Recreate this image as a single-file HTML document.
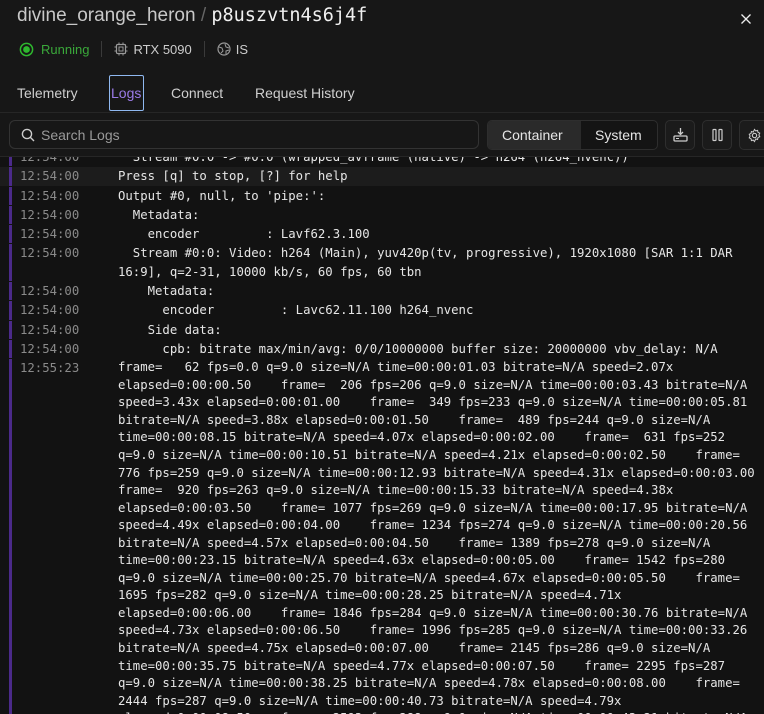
<!DOCTYPE html>
<html><head><meta charset="utf-8"><style>
*{box-sizing:border-box;margin:0;padding:0}
body{width:764px;height:714px;overflow:hidden;background:#171717;font-family:"Liberation Sans",sans-serif;color:#ddd;position:relative}
.abs{position:absolute}
.title{left:17px;top:5px;font-size:19px;color:#c8c8c8;white-space:nowrap}
.title .m{font-family:"DejaVu Sans Mono",monospace;color:#f0f0f0;font-size:18.5px}
.status{top:41px;left:19px;font-size:13px;display:flex;align-items:center;white-space:nowrap}
.sep{width:1px;height:16px;background:#3a3a3a;margin:0 12px}
.tabs{top:85px;font-size:14px;color:#cfcfcf}
.tab{position:absolute;top:0;white-space:nowrap}
.hline{left:0;right:0;top:112px;height:1px;background:#262626}
.search{left:9px;top:120px;width:470px;height:29px;border:1px solid #333;border-radius:6px;background:#171717}
.seg{left:487px;top:120px;width:171px;height:30px;border:1px solid #2e2e2e;border-radius:5px;background:#141414;font-size:14px}
.btn{top:120px;width:30px;height:30px;border:1px solid #2e2e2e;border-radius:5px;background:#1b1b1b}
.logs{left:0;top:156px;width:764px;height:558px;background:#121212;border-top:1px solid #262626;overflow:hidden;font-family:"DejaVu Sans Mono",monospace;font-size:12.3px;color:#e6e6e6}
.row{position:relative;margin-bottom:1px;line-height:18.3px}
.row .bar{position:absolute;left:9px;top:0;bottom:0;width:3px;background:#4b2a8a}
.row .ts{position:absolute;left:20px;top:0;color:#8a8a8a}
.row .msg{margin-left:118px;white-space:pre}
.row .msg.big{white-space:normal}
.big div{height:17.55px;line-height:17.55px;white-space:pre}
</style></head><body>
<div class="abs title">divine_orange_heron <span style="color:#666">/</span> <span class="m">p8uszvtn4s6j4f</span></div>
<svg class="abs" style="left:741px;top:14px" width="10" height="10" viewBox="0 0 10 10"><path d="M0.5 0.5L9.5 9.5M9.5 0.5L0.5 9.5" stroke="#eee" stroke-width="1.3"/></svg>
<div class="abs status">
<svg width="15" height="15" viewBox="0 0 16 16"><circle cx="8" cy="8" r="6.5" fill="none" stroke="#2eb82e" stroke-width="1.6"/><circle cx="8" cy="8" r="3.6" fill="#2eb82e"/></svg>
<span style="color:#3aa83a;margin-left:7px">Running</span>
<span class="sep"></span>
<svg width="14" height="14" viewBox="0 0 14 14"><rect x="2.5" y="2.5" width="9" height="9" rx="1" fill="none" stroke="#999" stroke-width="1.2"/><rect x="5" y="5" width="4" height="4" fill="none" stroke="#999"/><path d="M5 0.5v2M9 0.5v2M5 11.5v2M9 11.5v2M0.5 5h2M0.5 9h2M11.5 5h2M11.5 9h2" stroke="#999"/></svg>
<span style="color:#ccc;margin-left:5px">RTX 5090</span>
<span class="sep"></span>
<svg width="14" height="14" viewBox="0 0 14 14"><circle cx="7" cy="7" r="6" fill="none" stroke="#999" stroke-width="1.2"/><path d="M2 5l3 1 1 3-2 2M8 2l1 3 3 1M9 12l0-3 3-1" fill="none" stroke="#999"/></svg>
<span style="color:#ccc;margin-left:5px">IS</span>
</div>
<div class="abs tabs" style="left:0;width:764px">
<span class="tab" style="left:17px">Telemetry</span>
<span class="tab" style="left:109px;top:-10px;width:35px;height:36px;border:1px solid #8fb8f0;border-radius:2px;color:#9b7be8;padding-top:9px;padding-left:1px">Logs</span>
<span class="tab" style="left:171px">Connect</span>
<span class="tab" style="left:255px">Request History</span>
</div>
<div class="abs hline"></div>
<div class="abs search">
<svg class="abs" style="left:11px;top:7px" width="14" height="14" viewBox="0 0 14 14"><circle cx="6" cy="6" r="4.6" fill="none" stroke="#ccc" stroke-width="1.4"/><path d="M9.4 9.4L13 13" stroke="#ccc" stroke-width="1.4"/></svg>
<span class="abs" style="left:31px;top:6px;font-size:14px;color:#9a9a9a">Search Logs</span>
</div>
<div class="abs seg">
<div class="abs" style="left:0;top:0;width:93px;height:28px;background:#2a2a2a;border-radius:4px 0 0 4px"></div>
<span class="abs" style="left:14px;top:6px;color:#e6e6e6">Container</span>
<span class="abs" style="left:107px;top:6px;color:#e6e6e6">System</span>
</div>
<div class="abs btn" style="left:665px"><svg class="abs" style="left:7px;top:6px" width="15" height="16" viewBox="0 0 15 16"><path d="M7.5 1v6M5 5l2.5 2.5L10 5" fill="none" stroke="#ccc" stroke-width="1.3"/><rect x="1" y="9" width="13" height="5" rx="1" fill="none" stroke="#ccc" stroke-width="1.3"/><path d="M3 11.5h3" stroke="#ccc"/></svg></div>
<div class="abs btn" style="left:702px"><svg class="abs" style="left:8px;top:7px" width="13" height="14" viewBox="0 0 13 14"><rect x="2" y="1.5" width="3" height="11" rx=".5" fill="none" stroke="#ccc" stroke-width="1.2"/><rect x="8" y="1.5" width="3" height="11" rx=".5" fill="none" stroke="#ccc" stroke-width="1.2"/></svg></div>
<div class="abs btn" style="left:739px;width:40px"><svg class="abs" style="left:7px;top:7px" width="15" height="15" viewBox="0 0 16 16"><circle cx="8" cy="8" r="2.3" fill="none" stroke="#ccc" stroke-width="1.2"/><path d="M8 1.5l1.3 1.6 2-.5.4 2 1.9.9-.9 1.9.9 1.9-1.9.9-.4 2-2-.5L8 14.5l-1.3-1.6-2 .5-.4-2-1.9-.9.9-1.9-.9-1.9 1.9-.9.4-2 2 .5z" fill="none" stroke="#ccc" stroke-width="1.1"/></svg></div>

<div class="abs logs">
<div style="margin-top:-9px">
<div class="row"><span class="bar"></span><span class="ts">12:54:00</span><div class="msg">  Stream #0:0 -&gt; #0:0 (wrapped_avframe (native) -&gt; h264 (h264_nvenc))</div></div>
<div class="row" style="background:#1c1c1c"><span class="bar"></span><span class="ts">12:54:00</span><div class="msg">Press [q] to stop, [?] for help</div></div>
<div class="row"><span class="bar"></span><span class="ts">12:54:00</span><div class="msg">Output #0, null, to 'pipe:':</div></div>
<div class="row"><span class="bar"></span><span class="ts">12:54:00</span><div class="msg">  Metadata:</div></div>
<div class="row"><span class="bar"></span><span class="ts">12:54:00</span><div class="msg">    encoder         : Lavf62.3.100</div></div>
<div class="row"><span class="bar"></span><span class="ts">12:54:00</span><div class="msg">  Stream #0:0: Video: h264 (Main), yuv420p(tv, progressive), 1920x1080 [SAR 1:1 DAR
16:9], q=2-31, 10000 kb/s, 60 fps, 60 tbn</div></div>
<div class="row"><span class="bar"></span><span class="ts">12:54:00</span><div class="msg">    Metadata:</div></div>
<div class="row"><span class="bar"></span><span class="ts">12:54:00</span><div class="msg">      encoder         : Lavc62.11.100 h264_nvenc</div></div>
<div class="row"><span class="bar"></span><span class="ts">12:54:00</span><div class="msg">    Side data:</div></div>
<div class="row"><span class="bar"></span><span class="ts">12:54:00</span><div class="msg">      cpb: bitrate max/min/avg: 0/0/10000000 buffer size: 20000000 vbv_delay: N/A</div></div>
<div class="row"><span class="bar"></span><span class="ts">12:55:23</span><div class="msg big"><div>frame=   62 fps=0.0 q=9.0 size=N/A time=00:00:01.03 bitrate=N/A speed=2.07x</div><div>elapsed=0:00:00.50    frame=  206 fps=206 q=9.0 size=N/A time=00:00:03.43 bitrate=N/A</div><div>speed=3.43x elapsed=0:00:01.00    frame=  349 fps=233 q=9.0 size=N/A time=00:00:05.81</div><div>bitrate=N/A speed=3.88x elapsed=0:00:01.50    frame=  489 fps=244 q=9.0 size=N/A</div><div>time=00:00:08.15 bitrate=N/A speed=4.07x elapsed=0:00:02.00    frame=  631 fps=252</div><div>q=9.0 size=N/A time=00:00:10.51 bitrate=N/A speed=4.21x elapsed=0:00:02.50    frame=</div><div>776 fps=259 q=9.0 size=N/A time=00:00:12.93 bitrate=N/A speed=4.31x elapsed=0:00:03.00</div><div>frame=  920 fps=263 q=9.0 size=N/A time=00:00:15.33 bitrate=N/A speed=4.38x</div><div>elapsed=0:00:03.50    frame= 1077 fps=269 q=9.0 size=N/A time=00:00:17.95 bitrate=N/A</div><div>speed=4.49x elapsed=0:00:04.00    frame= 1234 fps=274 q=9.0 size=N/A time=00:00:20.56</div><div>bitrate=N/A speed=4.57x elapsed=0:00:04.50    frame= 1389 fps=278 q=9.0 size=N/A</div><div>time=00:00:23.15 bitrate=N/A speed=4.63x elapsed=0:00:05.00    frame= 1542 fps=280</div><div>q=9.0 size=N/A time=00:00:25.70 bitrate=N/A speed=4.67x elapsed=0:00:05.50    frame=</div><div>1695 fps=282 q=9.0 size=N/A time=00:00:28.25 bitrate=N/A speed=4.71x</div><div>elapsed=0:00:06.00    frame= 1846 fps=284 q=9.0 size=N/A time=00:00:30.76 bitrate=N/A</div><div>speed=4.73x elapsed=0:00:06.50    frame= 1996 fps=285 q=9.0 size=N/A time=00:00:33.26</div><div>bitrate=N/A speed=4.75x elapsed=0:00:07.00    frame= 2145 fps=286 q=9.0 size=N/A</div><div>time=00:00:35.75 bitrate=N/A speed=4.77x elapsed=0:00:07.50    frame= 2295 fps=287</div><div>q=9.0 size=N/A time=00:00:38.25 bitrate=N/A speed=4.78x elapsed=0:00:08.00    frame=</div><div>2444 fps=287 q=9.0 size=N/A time=00:00:40.73 bitrate=N/A speed=4.79x</div><div>elapsed=0:00:08.50    frame= 2593 fps=288 q=9.0 size=N/A time=00:00:43.21 bitrate=N/A</div></div></div>
</div>
</div>
</body></html>
